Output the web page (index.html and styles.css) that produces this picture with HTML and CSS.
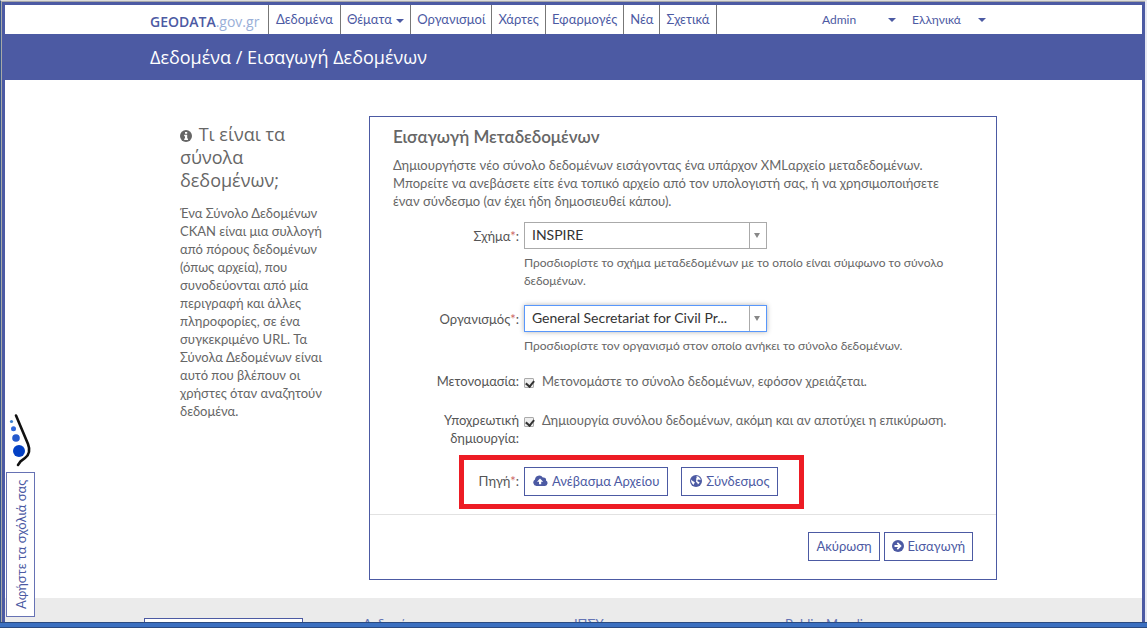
FILE: index.html
```html
<!DOCTYPE html>
<html lang="el">
<head>
<meta charset="utf-8">
<title>GEODATA.gov.gr</title>
<link rel="stylesheet" href="styles.css">
</head>
<body>
<div class="window">
<div class="page">
  <header class="topbar">
    <div class="container topbar-row">
      <a class="logo" href="#"><span class="logo-main">GEODATA</span><span class="logo-sub">.gov.gr</span></a>
      <nav class="nav">
        <a href="#">Δεδομένα</a>
        <a href="#">Θέματα <span class="caret"></span></a>
        <a href="#">Οργανισμοί</a>
        <a href="#">Χάρτες</a>
        <a href="#">Εφαρμογές</a>
        <a href="#">Νέα</a>
        <a href="#">Σχετικά</a>
      </nav>
      <div class="account">
        <button class="menu" type="button">Admin <span class="caret"></span></button>
        <button class="menu" type="button">Ελληνικά <span class="caret"></span></button>
      </div>
    </div>
  </header>
  <div class="band"><div class="container">Δεδομένα / Εισαγωγή Δεδομένων</div></div>

  <main class="container content">
    <aside class="sidebar">
      <h2><svg class="info" viewBox="0 0 12 12"><circle cx="6" cy="6" r="6"/><path d="M5 2h2.200v1.800H5zM4.200 4.800h3v3.700h.8V10H4.200V8.500H5V6.200h-.8z" fill="#fff"/></svg> Τι είναι τα<br>σύνολα<br>δεδομένων;</h2>
      <p>Ένα Σύνολο Δεδομένων<br>CKAN είναι μια συλλογή<br>από πόρους δεδομένων<br>(όπως αρχεία), που<br>συνοδεύονται από μία<br>περιγραφή και άλλες<br>πληροφορίες, σε ένα<br>συγκεκριμένο URL. Τα<br>Σύνολα Δεδομένων είναι<br>αυτό που βλέπουν οι<br>χρήστες όταν αναζητούν<br>δεδομένα.</p>
    </aside>

    <form class="card">
      <div class="card-body">
        <h1>Εισαγωγή Μεταδεδομένων</h1>
        <p class="intro">Δημιουργήστε νέο σύνολο δεδομένων εισάγοντας ένα υπάρχον XMLαρχείο μεταδεδομένων.<br>Μπορείτε να ανεβάσετε είτε ένα τοπικό αρχείο από τον υπολογιστή σας, ή να χρησιμοποιήσετε<br>έναν σύνδεσμο (αν έχει ήδη δημοσιευθεί κάπου).</p>

        <div class="row row-schema">
          <label class="label" for="schema">Σχήμα<span class="req">*</span>:</label>
          <div class="field">
            <div class="select"><select id="schema"><option>INSPIRE</option></select></div>
            <p class="help">Προσδιορίστε το σχήμα μεταδεδομένων με το οποίο είναι σύμφωνο το σύνολο<br>δεδομένων.</p>
          </div>
        </div>
        <div class="row row-org">
          <label class="label" for="org">Οργανισμός<span class="req">*</span>:</label>
          <div class="field">
            <div class="select select-active"><select id="org"><option>General Secretariat for Civil Pr...</option></select></div>
            <p class="help">Προσδιορίστε τον οργανισμό στον οποίο ανήκει το σύνολο δεδομένων.</p>
          </div>
        </div>
        <div class="row row-check">
          <label class="label" for="rename">Μετονομασία:</label>
          <div class="check"><input type="checkbox" id="rename" checked><label for="rename">Μετονομάστε το σύνολο δεδομένων, εφόσον χρειάζεται.</label></div>
        </div>
        <div class="row row-check">
          <label class="label" for="force">Υποχρεωτική<br>δημιουργία:</label>
          <div class="check"><input type="checkbox" id="force" checked><label for="force">Δημιουργία συνόλου δεδομένων, ακόμη και αν αποτύχει η επικύρωση.</label></div>
        </div>
        <div class="row row-source">
          <span class="label">Πηγή<span class="req">*</span>:</span>
          <div class="buttons">
            <button class="btn" type="button"><svg class="cloud" viewBox="0 0 15 11"><path d="M3.500 11A3.500 3.500 0 0 1 2 4.500 4.200 4.200 0 0 1 9.800 2.600 2.400 2.400 0 0 1 13 5.400 3 3 0 0 1 12 11z"/><path d="M7 3.500L4 6.700h2V9.300h2.200V6.700h2z" fill="#fff"/></svg>Ανέβασμα Αρχείου</button>
            <button class="btn" type="button"><svg class="round" viewBox="0 0 12 12"><circle cx="6" cy="6" r="6"/><path d="M6.500 1l2.200.8 1.900 2.200-.2 1.200-1.400-.7-1.300.3-.4 1.200.9.800 1.400.2-.5 1.300-1.200 1.100-.5-1.500-1.300-.9-.1-1.200.6-.9-.8-1 .9-.9zM1.100 4.500l1.500 1.600 1.900.8.300 1-.9.900.1 1.200-1.500-1L1.300 7z" fill="#fff"/></svg>Σύνδεσμος</button>
          </div>
          <span class="highlight"></span>
        </div>
      </div>
      <div class="actions">
        <button class="btn" type="button">Ακύρωση</button>
        <button class="btn" type="submit"><svg class="round" viewBox="0 0 12 12"><circle cx="6" cy="6" r="6"/><path d="M2.500 5.100h3.700L4.700 3.500l1.200-1.200L9.700 6 5.900 9.700 4.700 8.500l1.500-1.600H2.500z" fill="#fff"/></svg>Εισαγωγή</button>
      </div>
    </form>
  </main>

  <footer class="footer">
    <div class="container footer-row">
      <span class="footer-box"></span>
      <a class="footer-link" href="#">Δεδομένα</a>
      <a class="footer-link" href="#">ΙΠΣΥ</a>
      <a class="footer-link" href="#">PublicaMundi</a>
    </div>
  </footer>
</div>

<div class="feedback">
  <svg viewBox="0 0 26 54"><path d="M8 2.500L20 31Q23.500 40 17 45L12.500 48.500 10 52" fill="none" stroke="#111" stroke-width="2.600" stroke-linecap="round"/><circle cx="3.500" cy="8.500" r="1.600" fill="#3b82d0"/><circle cx="5.500" cy="15.700" r="2.500" fill="#2f68dc"/><circle cx="8" cy="25" r="3.800" fill="#2459cc"/><circle cx="11" cy="38" r="6" fill="#0340c4"/></svg>
  <button type="button">Αφήστε τα σχόλιά σας</button>
</div>
</div>
</body>
</html>
```
FILE: styles.css
```css
* { box-sizing: border-box; }
body {
  margin: 0;
  font: 13px/18px Lato, "Open Sans", "Noto Sans", sans-serif;
  color: #666;
}
h1, h2, p { margin: 0; font-weight: 400; }
a { color: inherit; text-decoration: none; }
button { font: inherit; color: #4c5aa3; background: #fff; }
svg { fill: currentColor; }

.window {
  position: relative;
  height: 100vh;
  overflow: hidden;
  display: flex;
  border: solid;
  border-width: 1px 2px 4px 1px;
  border-color: #dcdcdc #e6e8f2 #3b6cb8 #35558f;
}
.window::after {
  content: "";
  position: absolute;
  inset: auto 0 0;
  height: 1px;
  background: #dde1ea;
}
.window::before {
  content: "";
  position: fixed;
  inset: auto 0 0;
  height: 4px;
  z-index: 1;
  border: solid #2b4a80;
  border-width: 1px 0;
  background: #3b6fc0;
}
.page {
  flex: 1;
  min-width: 0;
  display: flex;
  flex-direction: column;
  overflow: hidden;
  margin-left: 1px;
  border: 3px solid #4c5aa3;
  border-bottom: 0;
  outline: 1px solid #a8a8a8;
  margin-top: 1px;
}
.container { width: 74.5%; max-width: 1170px; margin: 0 auto; }

.topbar { color: #4c5aa3; }
.topbar-row { display: flex; height: 29px; }
.logo { width: 118px; padding-top: 7px; white-space: nowrap; font: 14px/20px "Open Sans", "Noto Sans", sans-serif; }
.logo-main { font-weight: 600; }
.logo-sub { color: #9aafd8; }
.nav { display: flex; border-left: 1px solid #777; }
.nav a { padding: 5px 6px 0; border-right: 1px solid #777; white-space: nowrap; }
.nav a:first-child { padding: 5px 7px 0; }
.caret {
  display: inline-block;
  margin-left: 1px;
  vertical-align: 1px;
  border: 4px solid transparent;
  border-top-color: #4c5aa3;
  border-bottom: 0;
}
.account { display: flex; gap: 16px; margin-left: auto; padding-right: 11px; font-size: 12px; }
.menu { display: flex; justify-content: space-between; align-items: center; width: 74px; border: 0; padding: 0; }

.band {
  flex: none;
  height: 46px;
  background: #4c5aa3;
  color: #fff;
  font: 18px/46px "Open Sans", "Noto Sans", sans-serif;
}

.content { flex: none; display: flex; padding-top: 36px; }
.sidebar { flex: none; width: 219px; padding: 7px 0 0 30px; white-space: nowrap; }
.sidebar h2 { font: 18px/23px "Open Sans", "Noto Sans", sans-serif; margin-bottom: 12px; }
.info { width: 12px; height: 12px; margin-right: 2px; vertical-align: -1px; }

.card { flex: 1; min-width: 0; border: 1px solid #4c5aa3; }
.card-body { padding: 8px 23px 0; }
.card h1 { font-size: 17px; line-height: 24px; font-weight: 600; }
.intro { margin-top: 7px; white-space: nowrap; }
.row { position: relative; display: flex; gap: 5px; }
.label { flex: none; width: 126px; text-align: right; color: #555; }
.req { color: #c66; }
.row-schema { margin-top: 12px; }
.row-org { margin-top: 15px; }
.row-schema .label, .row-org .label { padding-top: 5px; }
.select { position: relative; width: 243px; }
.select select {
  display: block;
  appearance: none;
  width: 100%;
  height: 27px;
  margin: 0;
  padding: 0 24px 1px 7px;
  border: 1px solid #aaa;
  border-radius: 0;
  background: #fff;
  color: #333;
  font: 14px/20px Lato, "Open Sans", "Noto Sans", sans-serif;
}
.select::after {
  content: "";
  position: absolute;
  top: 11px;
  right: 7px;
  border: 3px solid transparent;
  border-top: 5px solid #888;
  border-bottom: 0;
}
.select::before {
  content: "";
  position: absolute;
  top: 1px;
  bottom: 1px;
  right: 17px;
  width: 1px;
  background: #aaa;
}
.select-active select { border-color: #5897fb; box-shadow: 0 0 5px rgba(0, 0, 0, .3); }
.help { margin-top: 5px; font-size: 12px; white-space: nowrap; }
.row-check { margin-top: 17px; }
.row-check + .row-check { margin-top: 21px; }
.check { display: flex; align-items: flex-start; gap: 8px; white-space: nowrap; }
.check input {
  appearance: none;
  width: 10px;
  height: 10px;
  margin: 6px 0 0;
  border: 1px solid #aaa;
  border-radius: 1px;
  background: #eee;
}
.check input:checked::before {
  content: "";
  display: block;
  width: 4px;
  height: 6px;
  margin: 0 0 0 2px;
  border: solid #333;
  border-width: 0 2px 2px 0;
  transform: rotate(40deg);
}
.row-source { margin-top: 20px; }
.row-source .label { padding-top: 5px; }
.buttons { display: flex; gap: 13px; }
.btn {
  display: flex;
  align-items: center;
  gap: 4px;
  height: 29px;
  padding: 0 7px 2px;
  border: 1px solid #4c5aa3;
  white-space: nowrap;
}
.buttons .btn { padding: 0 8px 2px; }
.cloud { width: 15px; height: 11px; }
.round { width: 12px; height: 12px; }
.highlight {
  position: absolute;
  inset: -12px 169px -13px 66px;
  border: 5px solid #ed1c24;
  pointer-events: none;
}
.actions {
  display: flex;
  justify-content: flex-end;
  gap: 4px;
  margin-top: 18px;
  padding: 17px 23px 18px;
  border-top: 1px solid #e2e2e2;
}

.footer { flex: 1 0 60px; margin-top: 18px; background: #ebebeb; color: #6474b5; }
.footer-row { display: flex; padding-top: 17px; }
.footer-box { width: 159px; height: 40px; margin: 3px 60px 0 -6px; border: 1px solid #4c5aa3; background: #fff; }
.footer-link { width: 211px; }

.feedback {
  position: absolute;
  left: 5px;
  bottom: 7px;
  display: flex;
  flex-direction: column;
  gap: 5px;
}
.feedback svg { width: 26px; height: 54px; margin-left: 2px; }
.feedback button {
  width: 29px;
  height: 145px;
  padding: 0;
  border: 1px solid #6672b4;
  writing-mode: vertical-rl;
  transform: rotate(180deg);
  white-space: nowrap;
}
```
